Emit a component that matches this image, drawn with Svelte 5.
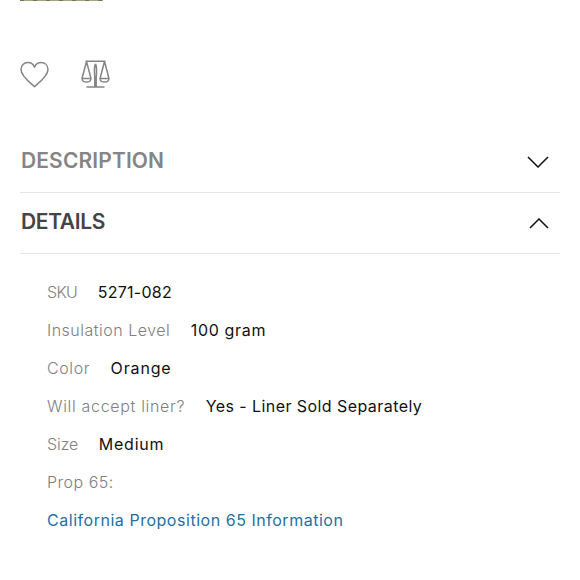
<script lang="ts">
    // tracking is the letter spacing in px of the label and of the value
    const details = [
        { label: "SKU", value: "5271-082", tracking: [-0.7, 0.28] },
        { label: "Insulation Level", value: "100 gram", tracking: [0.5, 0.65] },
        { label: "Color", value: "Orange", tracking: [0.6, 0.85] },
        { label: "Will accept liner?", value: "Yes - Liner Sold Separately", tracking: [0.68, 0.43] },
        { label: "Size", value: "Medium", tracking: [-0.1, 0.8] },
        { label: "Prop 65:", value: "", tracking: [0.5, 0] },
    ];

    let descriptionOpen = $state(false);
    let detailsOpen = $state(true);
</script>

<style>
    :global(body) {
        margin: 0;
        background: #fff;
    }

    .product {
        box-sizing: border-box;
        height: 580px;
        padding: 0 20px;
        overflow: hidden;
        font-family: Inter, "Open Sans", sans-serif;
    }

    .thumb {
        width: 83px;
        height: 1px;
        background: repeating-linear-gradient(90deg, #77744f 0 4px, #aaa57c 4px 13px);
    }

    .actions {
        display: flex;
        align-items: flex-start;
        gap: 32px;
        padding-top: 58px;
        height: 73px;
    }

    button {
        display: block;
        padding: 0;
        border: 0;
        background: none;
        font-family: inherit;
        cursor: pointer;
    }

    svg {
        display: block;
        fill: none;
    }

    .actions svg {
        stroke: #858585;
        stroke-width: 1.5;
        stroke-linejoin: round;
    }

    .section {
        box-sizing: border-box;
        display: flex;
        align-items: center;
        justify-content: space-between;
        width: 540px;
        height: 61px;
        padding: 0 11px 2px 1px;
        border-bottom: 1px solid #e4e4e4;
        color: #858585;
        font-size: 21px;
        font-weight: 600;
        line-height: 28px;
    }

    .section.open {
        color: #444;
    }

    .section svg {
        margin-top: 2px;
        stroke: #111;
        stroke-width: 1.5;
    }

    .title {
        letter-spacing: 0.12px;
    }

    .open .title {
        letter-spacing: -0.35px;
    }

    .details {
        padding: 19px 27px;
        font-size: 16px;
        line-height: 38px;
    }

    .row {
        display: flex;
        gap: 20.5px;
        height: 38px;
        white-space: nowrap;
    }

    .label {
        color: #808080;
        font-weight: 300;
    }

    .value {
        color: #111;
    }

    .details a {
        color: #256f9f;
        letter-spacing: 0.53px;
        text-decoration: none;
    }
</style>

<div class="product">
    <div class="thumb"></div>
    <div class="actions">
        <button aria-label="Add to wish list">
            <svg width="29" height="30" viewBox="0 0 29 30">
                <path d="M14.5 27.6C10 23.6 1 17.2 1 10.5C1 6.2 4 3.6 7.8 3.6C11.2 3.6 13.3 5.3 14.5 8.2C15.7 5.3 17.8 3.6 21.2 3.6C25 3.6 28 6.2 28 10.5C28 17.2 19 23.6 14.5 27.6Z" />
            </svg>
        </button>
        <button aria-label="Add to compare">
            <svg width="29" height="30" viewBox="0 0 29 30">
                <path d="M4.5 2.3H24.5M5.5 28H23.5M5.5 2.5L1 19.5H10L5.5 2.5M23.5 2.5L19 19.5H28L23.5 2.5M1 19.5C1.4 24.2 9.6 24.2 10 19.5M19 19.5C19.4 24.2 27.6 24.2 28 19.5M14.5 4.8C12.8 8 13.2 10 13.8 19V27.5M14.5 4.8C16.2 8 15.8 10 15.2 19V27.5" />
            </svg>
        </button>
    </div>

    <button class="section" class:open={descriptionOpen} onclick={() => (descriptionOpen = !descriptionOpen)}>
        <span class="title">DESCRIPTION</span>
        <svg width="22" height="12" viewBox="0 0 22 12">
            <path d="M1 1L11 11L21 1" />
        </svg>
    </button>
    <button class="section" class:open={detailsOpen} onclick={() => (detailsOpen = !detailsOpen)}>
        <span class="title">DETAILS</span>
        <svg width="20" height="11" viewBox="0 0 20 11">
            <path d="M1 10L10 1L19 10" />
        </svg>
    </button>

    {#if detailsOpen}
        <div class="details">
            {#each details as item}
                <div class="row">
                    <span class="label" style="letter-spacing: {item.tracking[0]}px">{item.label}</span>
                    <span class="value" style="letter-spacing: {item.tracking[1]}px">{item.value}</span>
                </div>
            {/each}
            <div class="row">
                <a href="#prop65">California Proposition 65 Information</a>
            </div>
        </div>
    {/if}
</div>
